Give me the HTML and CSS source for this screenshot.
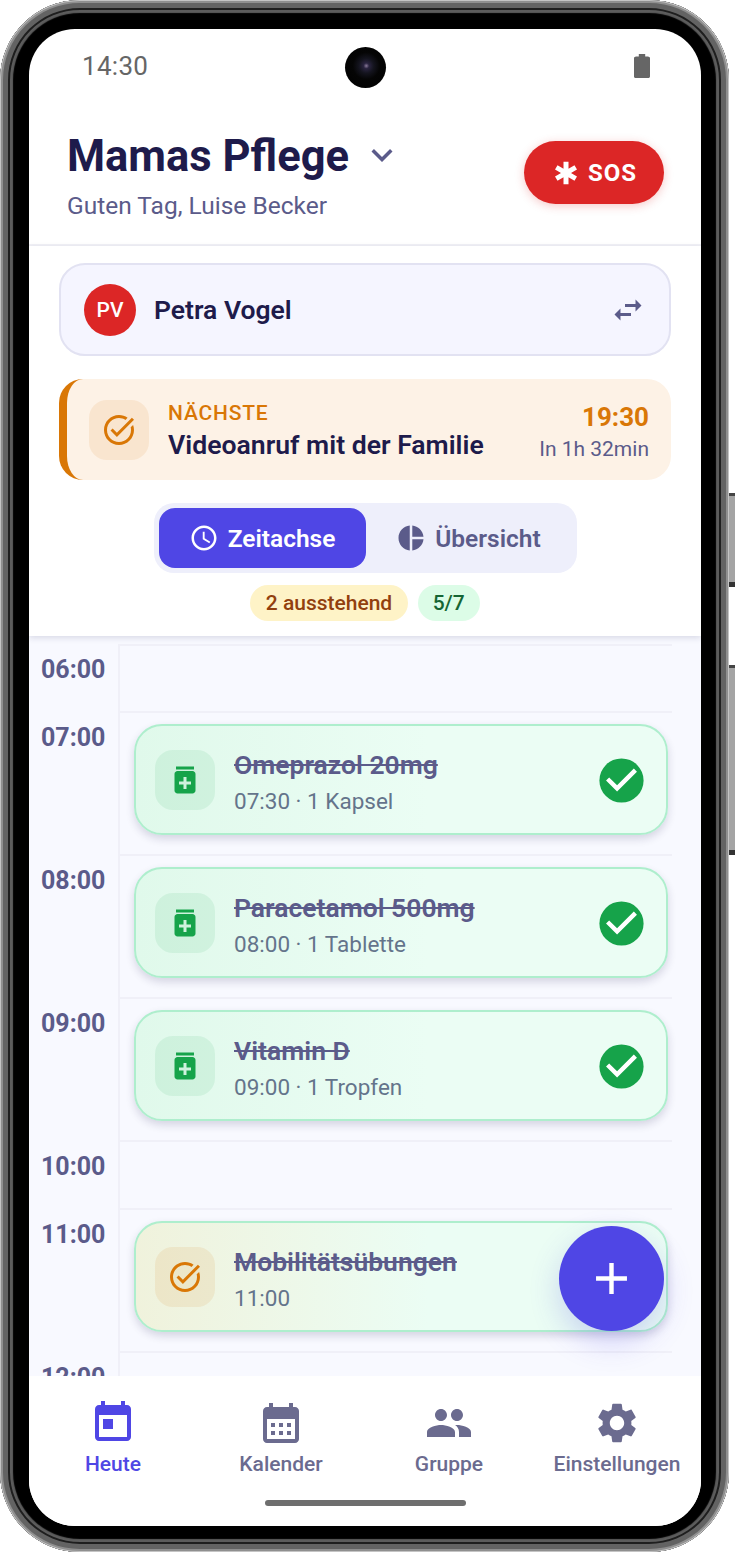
FILE: index.html
```html
<!DOCTYPE html>
<html lang="de">
<head>
    <meta charset="UTF-8">
    <title>Mamas Pflege</title>
    <link rel="stylesheet" href="styles.css">
</head>
<body>
<div class="phone">
    <span class="side-btn side-btn-a"></span>
    <span class="side-btn side-btn-b"></span>
    <div class="screen">
        <div class="camera"></div>

        <div class="status-bar">
            <span class="clock">14:30</span>
            <svg class="battery" viewBox="7 2 10 20" preserveAspectRatio="none"><path d="M15.67 4H14V2h-4v2H8.33C7.6 4 7 4.6 7 5.33v15.33C7 21.4 7.6 22 8.33 22h7.33c.74 0 1.34-.6 1.34-1.33V5.33C17 4.6 16.4 4 15.67 4z"/></svg>
        </div>

        <header class="header">
            <div>
                <div class="title-row">
                    <h1 class="title">Mamas Pflege</h1>
                    <svg class="chevron" viewBox="0 0 24 24"><path d="M16.59 8.59L12 13.17 7.41 8.59 6 10l6 6 6-6z"/></svg>
                </div>
                <p class="greeting">Guten Tag, Luise Becker</p>
            </div>
            <button class="sos">
                <svg class="sos-icon" viewBox="0 0 24 24"><path d="M20.79 9.23l-2-3.46L14 8.54V3h-4v5.54L5.21 5.77l-2 3.46L8 12l-4.79 2.77 2 3.46L10 15.46V21h4v-5.54l4.79 2.77 2-3.46L16 12z"/></svg>
                SOS
            </button>
        </header>

        <section class="panel">
            <div class="person">
                <span class="avatar">PV</span>
                <span class="person-name">Petra Vogel</span>
                <svg class="swap" viewBox="0 0 24 24"><path d="M6.99 11L3 15l3.99 4v-3H14v-2H6.99v-3zM21 9l-3.99-4v3H10v2h7.01v3L21 9z"/></svg>
            </div>

            <div class="next">
                <span class="icon-box icon-box-amber">
                    <svg class="task-icon" viewBox="0 0 24 24"><path d="M22 5.18L10.59 16.6l-4.24-4.24 1.41-1.41 2.83 2.83 10-10L22 5.18zm-2.21 5.04c.13.57.21 1.17.21 1.78 0 4.42-3.58 8-8 8s-8-3.58-8-8 3.58-8 8-8c1.58 0 3.04.46 4.28 1.25l1.44-1.44C16.1 2.67 14.13 2 12 2 6.48 2 2 6.48 2 12s4.48 10 10 10 10-4.48 10-10c0-1.19-.22-2.33-.6-3.39l-1.61 1.61z"/></svg>
                </span>
                <div class="next-text">
                    <div class="next-label">NÄCHSTE</div>
                    <div class="next-title">Videoanruf mit der Familie</div>
                </div>
                <div class="next-when">
                    <div class="next-time">19:30</div>
                    <div class="next-left">In 1h 32min</div>
                </div>
            </div>

            <div class="tabs">
                <div class="tab tab-active">
                    <svg class="tab-icon" viewBox="0 0 24 24"><path d="M11.99 2C6.47 2 2 6.48 2 12s4.47 10 9.99 10C17.52 22 22 17.52 22 12S17.52 2 11.99 2zM12 20c-4.42 0-8-3.58-8-8s3.58-8 8-8 8 3.58 8 8-3.58 8-8 8zm.5-13H11v6l5.25 3.15.75-1.23-4.5-2.67z"/></svg>
                    Zeitachse
                </div>
                <div class="tab">
                    <svg class="tab-icon" viewBox="0 0 24 24"><path d="M11 2v20c-5.07-.5-9-4.79-9-10s3.93-9.5 9-10zm2.03 0v8.99H22c-.47-4.74-4.24-8.52-8.97-8.99zm0 11.01V22c4.74-.47 8.5-4.25 8.97-8.99h-8.97z"/></svg>
                    Übersicht
                </div>
            </div>

            <div class="badges">
                <span class="badge badge-amber">2 ausstehend</span>
                <span class="badge badge-green">5/7</span>
            </div>
        </section>

        <main class="timeline">
            <div class="row">
                <div class="hour">06:00</div>
                <div class="slot"></div>
            </div>
            <div class="row">
                <div class="hour">07:00</div>
                <div class="slot">
                    <div class="card">
                        <span class="icon-box icon-box-green">
                            <svg class="med-icon" viewBox="0 0 24 24"><path d="M6 3h12v2H6zm11 3H7c-1.1 0-2 .9-2 2v11c0 1.1.9 2 2 2h10c1.1 0 2-.9 2-2V8c0-1.1-.9-2-2-2zm-1 9h-3v3h-2v-3H8v-2h3v-3h2v3h3v2z"/></svg>
                        </span>
                        <div class="card-text">
                            <div class="card-title">Omeprazol 20mg</div>
                            <div class="card-sub">07:30 · 1 Kapsel</div>
                        </div>
                        <svg class="done" viewBox="0 0 24 24"><circle cx="12" cy="12" r="10" fill="#16a34a"/><path fill="#fff" d="M10 17l-5-5 1.41-1.41L10 14.17l7.59-7.59L19 8l-9 9z"/></svg>
                    </div>
                </div>
            </div>
            <div class="row">
                <div class="hour">08:00</div>
                <div class="slot">
                    <div class="card">
                        <span class="icon-box icon-box-green">
                            <svg class="med-icon" viewBox="0 0 24 24"><path d="M6 3h12v2H6zm11 3H7c-1.1 0-2 .9-2 2v11c0 1.1.9 2 2 2h10c1.1 0 2-.9 2-2V8c0-1.1-.9-2-2-2zm-1 9h-3v3h-2v-3H8v-2h3v-3h2v3h3v2z"/></svg>
                        </span>
                        <div class="card-text">
                            <div class="card-title">Paracetamol 500mg</div>
                            <div class="card-sub">08:00 · 1 Tablette</div>
                        </div>
                        <svg class="done" viewBox="0 0 24 24"><circle cx="12" cy="12" r="10" fill="#16a34a"/><path fill="#fff" d="M10 17l-5-5 1.41-1.41L10 14.17l7.59-7.59L19 8l-9 9z"/></svg>
                    </div>
                </div>
            </div>
            <div class="row">
                <div class="hour">09:00</div>
                <div class="slot">
                    <div class="card">
                        <span class="icon-box icon-box-green">
                            <svg class="med-icon" viewBox="0 0 24 24"><path d="M6 3h12v2H6zm11 3H7c-1.1 0-2 .9-2 2v11c0 1.1.9 2 2 2h10c1.1 0 2-.9 2-2V8c0-1.1-.9-2-2-2zm-1 9h-3v3h-2v-3H8v-2h3v-3h2v3h3v2z"/></svg>
                        </span>
                        <div class="card-text">
                            <div class="card-title">Vitamin D</div>
                            <div class="card-sub">09:00 · 1 Tropfen</div>
                        </div>
                        <svg class="done" viewBox="0 0 24 24"><circle cx="12" cy="12" r="10" fill="#16a34a"/><path fill="#fff" d="M10 17l-5-5 1.41-1.41L10 14.17l7.59-7.59L19 8l-9 9z"/></svg>
                    </div>
                </div>
            </div>
            <div class="row">
                <div class="hour">10:00</div>
                <div class="slot"></div>
            </div>
            <div class="row">
                <div class="hour">11:00</div>
                <div class="slot">
                    <div class="card card-task">
                        <span class="icon-box icon-box-amber">
                            <svg class="task-icon" viewBox="0 0 24 24"><path d="M22 5.18L10.59 16.6l-4.24-4.24 1.41-1.41 2.83 2.83 10-10L22 5.18zm-2.21 5.04c.13.57.21 1.17.21 1.78 0 4.42-3.58 8-8 8s-8-3.58-8-8 3.58-8 8-8c1.58 0 3.04.46 4.28 1.25l1.44-1.44C16.1 2.67 14.13 2 12 2 6.48 2 2 6.48 2 12s4.48 10 10 10 10-4.48 10-10c0-1.19-.22-2.33-.6-3.39l-1.61 1.61z"/></svg>
                        </span>
                        <div class="card-text">
                            <div class="card-title">Mobilitätsübungen</div>
                            <div class="card-sub">11:00</div>
                        </div>
                    </div>
                </div>
            </div>
            <div class="row">
                <div class="hour">12:00</div>
                <div class="slot"></div>
            </div>
        </main>

        <button class="fab">
            <svg class="fab-icon" viewBox="0 0 24 24"><path d="M19 13h-6v6h-2v-6H5v-2h6V5h2v6h6v2z"/></svg>
        </button>

        <nav class="nav">
            <div class="nav-item nav-active">
                <svg class="nav-icon" viewBox="0 0 24 24"><path d="M19 3h-1V1h-2v2H8V1H6v2H5c-1.11 0-1.99.9-1.99 2L3 19c0 1.1.89 2 2 2h14c1.1 0 2-.9 2-2V5c0-1.1-.9-2-2-2zm0 16H5V8h14v11zM7 10h5v5H7z"/></svg>
                <span>Heute</span>
            </div>
            <div class="nav-item">
                <svg class="nav-icon" viewBox="0 0 24 24"><path d="M19 4h-1V2h-2v2H8V2H6v2H5c-1.1 0-2 .9-2 2v14c0 1.1.9 2 2 2h14c1.1 0 2-.9 2-2V6c0-1.1-.9-2-2-2zm0 16H5V10h14v10zM9 14H7v-2h2v2zm4 0h-2v-2h2v2zm4 0h-2v-2h2v2zm-8 4H7v-2h2v2zm4 0h-2v-2h2v2zm4 0h-2v-2h2v2z"/></svg>
                <span>Kalender</span>
            </div>
            <div class="nav-item">
                <svg class="nav-icon" viewBox="0 0 24 24"><path d="M16 11c1.66 0 2.99-1.34 2.99-3S17.66 5 16 5c-1.66 0-3 1.34-3 3s1.34 3 3 3zm-8 0c1.66 0 2.99-1.34 2.99-3S9.66 5 8 5C6.34 5 5 6.34 5 8s1.34 3 3 3zm0 2c-2.33 0-7 1.17-7 3.5V19h14v-2.5c0-2.33-4.67-3.5-7-3.5zm8 0c-.29 0-.62.02-.97.05 1.16.84 1.97 1.97 1.97 3.45V19h6v-2.5c0-2.33-4.67-3.5-7-3.5z"/></svg>
                <span>Gruppe</span>
            </div>
            <div class="nav-item">
                <svg class="nav-icon" viewBox="0 0 24 24"><path d="M19.14 12.94c.04-.3.06-.61.06-.94 0-.32-.02-.64-.07-.94l2.03-1.58c.18-.14.23-.41.12-.61l-1.92-3.32c-.12-.22-.37-.29-.59-.22l-2.39.96c-.5-.38-1.03-.7-1.62-.94l-.36-2.54c-.04-.24-.24-.41-.48-.41h-3.84c-.24 0-.43.17-.47.41l-.36 2.54c-.59.24-1.13.57-1.62.94l-2.39-.96c-.22-.08-.47 0-.59.22L2.74 8.87c-.12.21-.08.47.12.61l2.03 1.58c-.05.3-.09.63-.09.94s.02.64.07.94l-2.03 1.58c-.18.14-.23.41-.12.61l1.92 3.32c.12.22.37.29.59.22l2.39-.96c.5.38 1.03.7 1.62.94l.36 2.54c.05.24.24.41.48.41h3.84c.24 0 .44-.17.47-.41l.36-2.54c.59-.24 1.13-.56 1.62-.94l2.39.96c.22.08.47 0 .59-.22l1.92-3.32c.12-.22.07-.47-.12-.61l-2.01-1.58zM12 15.6c-1.98 0-3.6-1.62-3.6-3.6s1.62-3.6 3.6-3.6 3.6 1.62 3.6 3.6-1.62 3.6-3.6 3.6z"/></svg>
                <span>Einstellungen</span>
            </div>
            <div class="home-bar"></div>
        </nav>
    </div>
</div>
</body>
</html>
```

FILE: styles.css
```css
* { margin: 0; padding: 0; box-sizing: border-box; }
html, body { background: #fff; }
body { font-family: Roboto, "Liberation Sans", sans-serif; width: 735px; height: 1553px; overflow: hidden; }
svg { display: block; fill: currentColor; flex: none; }

/* phone frame */
.phone {
    position: relative;
    width: 729px;
    height: 1552px;
    padding: 29px 28px 26px 29px;
    background: #000;
    border-radius: 80px;
    box-shadow: inset 0 0 0 1px #c4c4c4, inset 0 0 0 3px #8f8f8f, inset 0 0 0 8px #636363, inset 0 0 0 10px #1e1e1e, inset 0 0 1px 13px #5c5c5c;
}
.side-btn { position: absolute; left: 729px; width: 6px; background: #a4a4a4; border-top: 3px solid #444; border-bottom: 5px solid #333; }
.side-btn-a { top: 493px; height: 94px; }
.side-btn-b { top: 665px; height: 190px; }

.screen {
    position: relative;
    display: flex;
    flex-direction: column;
    width: 672px;
    height: 1497px;
    background: #fff;
    border-radius: 46px;
    overflow: hidden;
}
.camera {
    position: absolute;
    left: 316px;
    top: 18px;
    width: 41px;
    height: 41px;
    border-radius: 50%;
    background: radial-gradient(circle at 52% 46%, #8a7a9a 0, #2a2440 9%, #14141e 24%, #050505 44%, #000 100%);
}

/* top */
.status-bar { height: 74px; padding: 0 51px 0 53px; display: flex; align-items: center; justify-content: space-between; color: #666; flex: none; }
.clock { font-size: 26px; letter-spacing: .3px; }
.battery { width: 16px; height: 24px; }

.header { height: 143px; flex: none; padding: 28px 37px 0 38px; display: flex; justify-content: space-between; align-items: flex-start; border-bottom: 2px solid #f1f1f6; }
.title-row { display: flex; align-items: center; gap: 12px; }
.title { font-size: 43.5px; line-height: 52px; font-weight: 700; color: #1e1b4b; }
.chevron { width: 42px; height: 42px; color: #5b5b8a; margin-top: -4px; }
.greeting { font-size: 24.5px; line-height: 28px; color: #5b5b8a; margin-top: 9px; }
.sos { margin-top: 10px; width: 140px; height: 63px; border: 0; border-radius: 32px; background: #dc2626; color: #fff; font: 700 24px Roboto, sans-serif; letter-spacing: 1px; display: flex; align-items: center; justify-content: center; gap: 7px; box-shadow: 0 2px 10px rgba(220, 38, 38, .25); }
.sos-icon { width: 30px; height: 30px; }

.panel { flex: none; height: 390px; padding: 17px 30px 0; background: #fff; position: relative; box-shadow: 0 2px 6px rgba(30, 27, 75, .14); }
.person { height: 93px; background: #f5f5ff; border: 2px solid #e2e2f2; border-radius: 26px; display: flex; align-items: center; padding: 0 23px 0 23px; }
.avatar { width: 52px; height: 52px; border-radius: 50%; background: #dc2626; color: #fff; font-size: 21px; font-weight: 500; display: flex; align-items: center; justify-content: center; }
.person-name { font-size: 26.5px; font-weight: 600; color: #1e1b4b; margin-left: 18px; flex: 1; }
.swap { width: 36px; height: 36px; color: #5b5b8a; }

.next { margin-top: 23px; height: 101px; background: #fdf2e6; border-left: 8px solid #d97706; border-radius: 24px; display: flex; align-items: center; padding: 0 22px; }
.icon-box { width: 60px; height: 60px; border-radius: 18px; display: flex; align-items: center; justify-content: center; flex: none; }
.icon-box-amber { background: rgba(217, 119, 6, .1); color: #d97706; }
.icon-box-green { background: rgba(22, 163, 74, .09); color: #16a34a; }
.task-icon { width: 36px; height: 36px; }
.med-icon { width: 36px; height: 36px; }
.next-text { margin: 2px 0 0 19px; flex: 1; }
.next-label { font-size: 21px; line-height: 25px; font-weight: 500; color: #d97706; letter-spacing: .8px; }
.next-title { font-size: 26.6px; line-height: 32px; font-weight: 600; color: #1e1b4b; margin-top: 3px; }
.next-when { text-align: right; margin-top: 4px; }
.next-time { font-size: 26px; line-height: 32px; font-weight: 700; color: #d97706; }
.next-left { font-size: 21px; line-height: 28px; color: #5b5b8a; margin-top: 2px; }

.tabs { width: 423px; height: 70px; margin: 23px auto 0; padding: 5px; background: #eeeffb; border-radius: 20px; display: flex; }
.tab { flex: 1; display: flex; align-items: center; justify-content: center; gap: 9px; font-size: 24.5px; font-weight: 600; color: #5b5b8a; border-radius: 16px; }
.tab-active { flex: none; width: 207px; background: #4f46e5; color: #fff; }
.tab-icon { width: 30px; height: 30px; }

.badges { display: flex; justify-content: center; gap: 10px; margin-top: 12px; }
.badge { height: 36px; padding: 0 15px; border-radius: 18px; font-size: 21px; font-weight: 500; display: flex; align-items: center; }
.badge-amber { background: #fef3c7; color: #92400e; padding: 0 15.5px; }
.badge-green { background: #dcfce7; color: #166534; }

/* timeline */
.timeline { flex: 1; min-height: 0; overflow: hidden; background: #f8f9ff; padding-top: 8px; }
.row { display: flex; }
.hour { width: 89px; flex: none; padding: 11.5px 0 0 12px; font-size: 25px; line-height: 30px; font-weight: 700; color: #5b5b8a; }
.row:first-child .hour { padding-top: 10.5px; }
.slot { flex: none; width: 554px; min-height: 68px; border-left: 2px solid #f0f0f8; border-top: 2px solid #f0f0f8; padding: 11px 4px 19px 14px; }
.row:first-child .slot { min-height: 67px; }
.card { height: 111px; border: 2px solid #aeeecd; border-radius: 28px; background: linear-gradient(90deg, #e0f9eb, #ebfdf4 55%); display: flex; align-items: center; padding: 0 24px 0 19px; box-shadow: 0 4px 9px rgba(30, 27, 75, .16); }
.card-task { background: linear-gradient(90deg, #f0f2dc, #ebfdf4 55%); }
.card-text { margin: 5px 0 0 19px; flex: 1; }
.card-title { font-size: 26.5px; line-height: 32px; font-weight: 600; color: #5b5b8a; text-decoration: line-through; }
.card-sub { font-size: 22.5px; line-height: 28px; color: #64748b; margin-top: 6px; }
.done { width: 53px; height: 53px; margin: 1px -6px 0 0; }

.fab { position: absolute; left: 530px; top: 1197px; width: 105px; height: 105px; border: 0; border-radius: 50%; background: #4f46e5; color: #fff; display: flex; align-items: center; justify-content: center; box-shadow: 0 12px 30px rgba(79, 70, 229, .22); }
.fab-icon { width: 53px; height: 53px; }

/* bottom nav */
.nav { flex: none; height: 150px; background: #fff; display: grid; grid-template-columns: repeat(4, 168px); position: relative; }
.nav-item { display: flex; flex-direction: column; align-items: center; padding-top: 23px; color: #6b6b8f; font-size: 21px; font-weight: 500; }
.nav-item span { margin-top: 3px; line-height: 28px; }
.nav-active { color: #4f46e5; }
.nav-icon { width: 48px; height: 48px; }
.home-bar { position: absolute; left: 236px; top: 124px; width: 201px; height: 6px; border-radius: 3px; background: #6e6e6e; }
```
